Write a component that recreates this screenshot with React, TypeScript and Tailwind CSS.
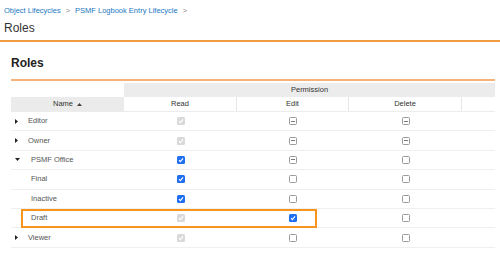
type Box = "disabled" | "checked" | "mixed" | "empty";

type Role = {
  name: string;
  level: "collapsed" | "expanded" | "child";
  read: Box;
  edit: Box;
  del: Box;
};

const roles: Role[] = [
  { name: "Editor", level: "collapsed", read: "disabled", edit: "mixed", del: "mixed" },
  { name: "Owner", level: "collapsed", read: "disabled", edit: "mixed", del: "mixed" },
  { name: "PSMF Office", level: "expanded", read: "checked", edit: "mixed", del: "empty" },
  { name: "Final", level: "child", read: "checked", edit: "empty", del: "empty" },
  { name: "Inactive", level: "child", read: "checked", edit: "empty", del: "empty" },
  { name: "Draft", level: "child", read: "disabled", edit: "checked", del: "empty" },
  { name: "Viewer", level: "collapsed", read: "disabled", edit: "empty", del: "empty" },
];

function Checkbox({ kind }: { kind: Box }) {
  if (kind === "checked" || kind === "disabled") {
    const bg = kind === "checked" ? "bg-[#1f6ff0]" : "bg-[#d9d9d9]";
    return (
      <span className={`flex h-2 w-2 items-center justify-center rounded-[1.5px] ${bg}`}>
        <svg width="6" height="6" viewBox="0 0 6 6">
          <path d="M1 3.2 L2.4 4.6 L5 1.4" fill="none" stroke="#fff" strokeWidth="1.2" />
        </svg>
      </span>
    );
  }
  return (
    <span className="flex h-2 w-2 items-center justify-center rounded-[1.5px] border border-[#9a9a9a] bg-white">
      {kind === "mixed" && <span className="h-px w-[4px] bg-[#7a7a7a]" />}
    </span>
  );
}

function Caret({ open }: { open: boolean }) {
  return open ? (
    <svg width="5" height="3" viewBox="0 0 5 3">
      <path d="M0 0 H5 L2.5 3 Z" fill="#222" />
    </svg>
  ) : (
    <svg width="3" height="5" viewBox="0 0 3 5">
      <path d="M0 0 V5 L3 2.5 Z" fill="#222" />
    </svg>
  );
}

function RoleRow({ role }: { role: Role }) {
  const textPad = role.level === "collapsed" ? "ml-[7px]" : "ml-[10px]";
  return (
    <div className="grid h-[19.4px] grid-cols-[113px_113px_112px_113px_1fr] border-b border-[#efefef] items-center">
      <div className="flex items-center pl-[4px] text-[#555]">
        <span className="flex w-[6px] items-center">
          {role.level !== "child" && <Caret open={role.level === "expanded"} />}
        </span>
        <span className={textPad}>{role.name}</span>
      </div>
      <div className="flex justify-center">
        <Checkbox kind={role.read} />
      </div>
      <div className="flex justify-center">
        <Checkbox kind={role.edit} />
      </div>
      <div className="flex justify-center">
        <Checkbox kind={role.del} />
      </div>
      <div />
    </div>
  );
}

export default function App() {
  return (
    <div className="h-[256px] w-[500px] overflow-hidden bg-white font-['Liberation_Sans',Arial,sans-serif]">
      <div className="flex items-center gap-[4px] px-[4px] pt-[6px] text-[7.5px] leading-[10px] text-[#1a78c2]">
        <span>Object Lifecycles</span>
        <span className="px-[1px] text-[#888]">&gt;</span>
        <span>PSMF Logbook Entry Lifecycle</span>
        <span className="px-[1px] text-[#888]">&gt;</span>
      </div>
      <h1 className="mt-[4px] px-[4px] text-[12px] leading-[16px] text-[#333]">Roles</h1>
      <div className="mt-[4px] h-[2px] bg-[#f29b45]" />

      <div className="ml-[11px] mr-[5px]">
        <h2 className="mt-[13px] text-[12px] font-bold leading-[16px] text-[#222]">Roles</h2>
        <div className="mt-[8px] h-[2px] bg-[#f7b27a]" />

        <div className="relative mt-[2px] text-[7.5px] leading-[10px]">
          <div className="grid h-[14px] grid-cols-[113px_1fr] items-stretch">
            <div />
            <div className="flex items-center justify-center bg-[#ececec] text-[#333]">Permission</div>
          </div>
          <div className="grid h-[15px] grid-cols-[113px_113px_112px_113px_1fr] border-b border-[#ececec] text-[#333]">
            <div className="flex items-center justify-center gap-[4px] bg-[#ebebeb]">
              <span>Name</span>
              <svg width="5" height="3" viewBox="0 0 5 3">
                <path d="M0 3 H5 L2.5 0 Z" fill="#444" />
              </svg>
            </div>
            <div className="flex items-center justify-center border-r border-[#e6e6e6]">Read</div>
            <div className="flex items-center justify-center border-r border-[#e6e6e6]">Edit</div>
            <div className="flex items-center justify-center border-r border-[#e6e6e6]">Delete</div>
            <div />
          </div>
          {roles.map((r) => (
            <RoleRow key={r.name} role={r} />
          ))}
          <div className="pointer-events-none absolute left-[10px] top-[126px] h-[19px] w-[296px] border-2 border-[#f7941d]" />
        </div>
      </div>
    </div>
  );
}
